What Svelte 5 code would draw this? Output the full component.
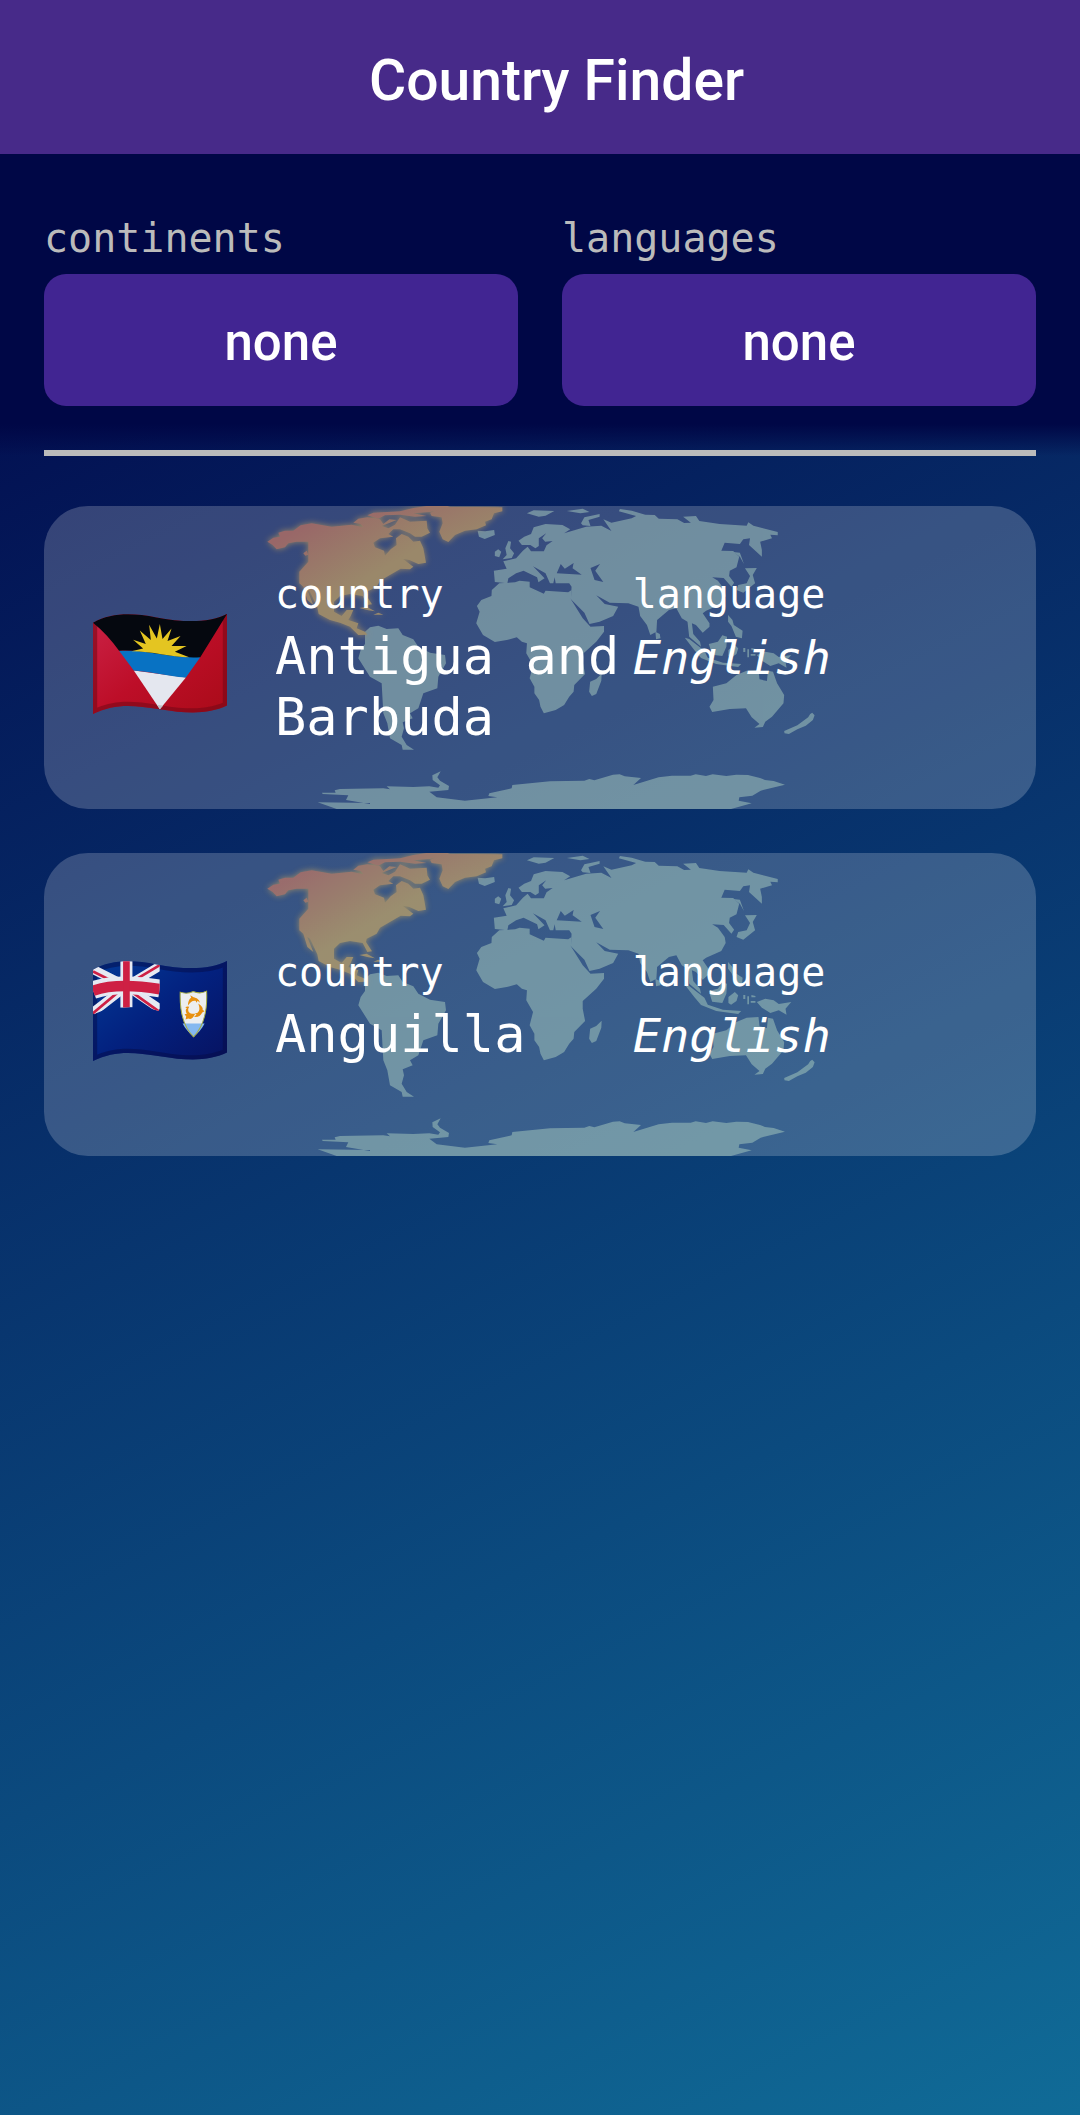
<script>
  let continent = $state('none');
  let tongue = $state('none');
  const countries = [
    { name: 'Antigua and Barbuda', language: 'English', flag: 'ag' },
    { name: 'Anguilla', language: 'English', flag: 'ai' }
  ];
</script>

{#snippet worldMap(id)}
  <svg class="map" viewBox="711 48 1638 909" aria-hidden="true">
    <defs>
      <linearGradient id="land-{id}" x1="0" y1="0" x2="0.8" y2="1">
        <stop offset="0.15" stop-color="#fb8656" />
        <stop offset="0.62" stop-color="#fdc658" />
      </linearGradient>
      <filter id="glow-{id}" x="-10%" y="-10%" width="120%" height="120%">
        <feGaussianBlur stdDeviation="9" />
      </filter>
    </defs>
    <g fill="#aacdc0" fill-rule="evenodd">
      <path d="M1005 425L1020 412L1045 407L1070 417L1105 415L1118 435L1150 448L1165 470L1200 488L1245 495L1248 520L1225 560L1222 595L1180 610L1165 655L1140 670L1148 685L1118 697L1122 715L1115 740L1130 765L1152 779H1118L1115 765L1080 745L1072 700L1060 670L1055 580L1020 560L985 505L992 480L1005 462Z" />
      <path d="M863 937L1020 939V942L948 930L955 916L878 912L876 908L917 908L914 901L930 897L1060 895L1080 898L1070 889L1150 891L1198 889L1225 893L1230 886L1208 870L1207 856L1232 844L1222 862L1230 872L1257 888L1255 900L1198 905L1220 922L1305 932L1402 922L1375 918L1378 910L1445 895L1447 885L1485 881L1560 874L1663 872L1678 867L1693 871L1749 854L1769 853L1784 859L1833 864L1810 885L1886 862L1926 857L1982 857L1997 853L2028 858L2048 853L2089 858L2119 854L2154 855L2190 864L2205 870L2231 873L2265 884L2192 902L2167 917L2128 922L2126 932L2165 940L2103 957H920Z" />
      <g transform="translate(-20 0) scale(1.014 1)">
        <path d="M1408 280L1455 277L1468 272L1498 275V292L1540 311L1545 302L1612 307L1622 300L1620 328L1655 385L1678 410L1718 408L1718 425L1695 455L1655 492L1655 515L1662 552L1630 585L1628 605L1615 620L1600 645L1575 660L1540 670L1530 650L1526 630L1512 610L1512 590L1498 565L1508 525L1488 490L1490 460L1475 455L1460 442L1430 450L1395 456L1360 435L1340 400L1350 365L1342 348L1355 330L1385 318L1386 300Z" />
        <path d="M1392 242L1430 236L1420 214L1458 205L1478 182L1492 170L1502 184L1540 184L1548 166L1566 153L1544 155L1535 145L1547 130L1525 145L1525 168L1515 175L1500 165L1475 165L1465 152L1482 140L1502 132L1510 112L1545 102L1595 105L1618 118L1600 130L1640 118L1665 110L1710 107L1740 123L1716 88L1740 98L1800 85L1813 78L1762 64L1765 57L1800 62L1840 74L1868 75L1880 86L1935 88L1955 99L1975 98L1952 80L1990 78L2000 93L2060 102L2140 107L2145 97L2160 107L2232 126L2232 136L2210 134L2215 145L2180 155L2185 180V200L2147 165L2150 145L2130 148L2120 162L2075 158L2065 182L2100 183L2118 200L2110 232L2090 242L2088 258L2103 278L2095 290L2072 264L2038 262L2055 272L2075 300L2078 318L2065 342L2020 362L2010 370L2030 400V410L2010 428L1990 405L1978 400L1982 432L2002 455L2005 470L1970 440L1965 395L1948 385L1932 355L1910 360L1875 390L1873 425L1855 435L1845 405L1825 378L1820 350L1790 340L1735 338L1695 316L1720 342L1760 350L1745 378L1705 395L1675 402L1660 368L1620 328L1622 290L1615 280L1575 280L1572 262L1568 280L1558 280L1545 250L1508 229L1542 265L1524 277L1520 262L1480 242L1458 250L1435 265L1432 280L1395 276ZM1578 250L1590 222L1602 236L1628 219L1625 235L1652 254ZM1678 234L1706 222L1692 242L1716 276L1690 270Z" />
        <path d="M1418 208L1430 195L1426 175L1435 153L1443 155L1440 175L1452 190L1445 204ZM1395 185L1405 178L1414 185L1408 202L1395 198ZM1344 122L1366 124L1393 120L1395 135L1365 147L1348 140ZM1490 70L1510 61L1571 63L1545 77L1525 80ZM1608 63L1655 56L1675 66L1648 70ZM1650 100L1660 82L1705 72V80L1672 90L1678 108L1655 106Z" />
        <path d="M2135 235L2170 234L2158 255L2165 280L2130 308L2110 300L2115 285L2140 280L2150 258ZM2100 186L2120 188L2132 222L2120 200ZM1870 425L1883 432L1885 445L1872 448ZM1957 443L1970 447L2015 482L2025 503L2070 518L2124 522L2115 531L2050 522L2005 504L1985 480ZM2028 462L2055 455L2068 436L2082 440L2080 470L2068 498L2038 494ZM2086 480L2105 465L2115 475L2110 492L2094 503L2086 498ZM2085 375L2098 390L2102 405L2128 422L2126 445L2108 440L2095 408L2085 395ZM2170 495L2195 485L2220 490L2235 501L2272 495L2255 515L2258 533L2235 520L2210 528L2185 512Z" />
        <path d="M2130 474h6v12h-6zM2142 478h5v24h-5zM2154 474l12 3v4h-12zM2152 492h14v5h-14z" />
        <path d="M2040 590L2080 580L2110 555L2140 542L2175 540L2178 568L2200 573L2203 542L2218 545L2230 580L2251 615L2249 640L2215 680L2195 695L2188 711L2163 713L2178 702L2155 682L2138 655L2090 657L2038 666L2030 650L2042 630ZM2328 672L2334 668L2341 676L2336 690L2315 707L2290 718L2265 732L2252 730L2251 723L2290 706L2322 682ZM1711 551L1710 572L1695 612L1682 618L1674 605L1677 575L1695 567Z" />
      </g>
    </g>
    {#each [true, false] as glowing}
      <g
        fill={glowing ? '#ffc24a' : `url(#land-${id})`}
        filter={glowing ? `url(#glow-${id})` : undefined}
      >
        <path d="M712 155L730 143L750 140L745 128L765 122L790 122L812 106L845 100L905 110L965 104L1000 112L992 102L970 98L985 86L1012 82L1050 88L1060 102L1078 88L1100 90L1055 108L1075 115L1095 104L1110 82L1140 95L1190 92L1192 115L1200 128L1175 140L1155 140L1140 130L1110 118L1090 118L1075 132L1090 140L1050 145L1030 158L1035 172L1062 182L1065 197L1082 178L1100 165L1098 145L1115 132L1135 140L1150 155L1170 152L1180 175L1188 218L1165 222L1138 210L1118 206L1150 230L1140 238L1112 236L1050 272L1040 290L1010 305L1008 315L1026 343L1012 345L998 318L960 312L930 318L912 335L912 365L935 378L950 360H970L962 378L955 390L985 400L980 415L1005 425L1012 434L985 435L960 410L930 398L900 390L866 372L862 352L840 305L832 300L850 345L832 330L820 290L808 280V245L835 215V155H800L775 160L765 172L740 178L728 165Z" />
        <path d="M1012 76L1030 68L1110 64L1150 54L1190 48H1260L1235 58L1200 66L1150 70L1190 78L1155 80L1110 74L1065 76L1045 86ZM1200 68L1250 50L1417 52V64L1392 70L1385 88L1365 95L1368 106L1340 118L1305 122L1275 135L1255 156L1238 148L1228 125L1238 100L1235 82L1205 78ZM988 354L1010 350L1035 364L1015 361ZM1030 374L1045 368L1060 374ZM820 190L830 182L835 194L826 197Z" />
      </g>
    {/each}
  </svg>
{/snippet}

{#snippet flagAg()}
  <svg class="flag" viewBox="40 72 401 299" role="img" aria-label="Flag of Antigua and Barbuda">
    <defs>
      <linearGradient id="ag-red" x1="0" y1="0" x2="1" y2="1">
        <stop offset="0" stop-color="#cb2348" />
        <stop offset="0.5" stop-color="#bd0e28" />
        <stop offset="1" stop-color="#a90b18" />
      </linearGradient>
      <clipPath id="ag-wave"><path d="M40 98C95 68 155 68 230 82S385 101 441 72V346C385 372 325 371 240 357S105 340 40 371Z" /></clipPath>
    </defs>
    <g clip-path="url(#ag-wave)">
      <path fill="url(#ag-red)" d="M40 60H441V380H40Z" />
      <path fill="none" stroke="#760818" stroke-opacity="0.6" stroke-width="25" d="M40 98V371C105 340 155 343 240 357S385 372 441 346V72" />
      <path fill="#e4e7ef" d="M162 241L318 262L240 357Z" />
      <path fill="#c0c2c8" d="M232 344L250 346L240 357Z" />
      <path fill="#0872c3" d="M118 182L240 180L361 201L318 262C260 258 220 245 162 241Z" />
      <path fill="#05080f" d="M40 98V60H441V72L361 201C285 207 190 176 118 182C95 150 70 122 40 98Z" />
      <path fill="#e4c521" d="M155 183L190 175L160 149L198 162L180 121L213 150L208 104L231 145L240 102L248 147L275 115L263 153L302 138L275 168L320 168L285 185L328 201C270 200 220 183 155 183Z" />
    </g>
  </svg>
{/snippet}

{#snippet flagAi()}
  <svg class="flag" viewBox="40 63 401 299" role="img" aria-label="Flag of Anguilla">
    <defs>
      <linearGradient id="ai-blue" x1="0" y1="0" x2="1" y2="1">
        <stop offset="0" stop-color="#033b98" />
        <stop offset="0.5" stop-color="#03217f" />
        <stop offset="1" stop-color="#071260" />
      </linearGradient>
      <clipPath id="ai-wave"><path d="M40 89C95 59 155 59 230 73S385 92 441 63V337C385 363 325 362 240 348S105 331 40 362Z" /></clipPath>
      <clipPath id="ai-jack"><path d="M40 60H240V213C205 200 155 199 122 203C90 204 65 210 40 225Z" /></clipPath>
    </defs>
    <g clip-path="url(#ai-wave)">
      <path fill="url(#ai-blue)" d="M40 50H441V370H40Z" />
      <path fill="none" stroke="#050c48" stroke-opacity="0.5" stroke-width="25" d="M40 89V362C105 331 155 334 240 348S385 363 441 337V63C385 92 300 87 230 73S95 59 40 89" />
      <g clip-path="url(#ai-jack)" fill="none">
        <path stroke="#e6e9f2" stroke-width="27" d="M40 88L140 138L240 206M240 78L140 138L40 216" />
        <path stroke="#ce2044" stroke-width="8" d="M40 94L140 144L236 213M240 75L140 135L40 219" />
        <path stroke="#e6e9f2" stroke-width="53" d="M40 150C90 132 160 132 240 145" />
        <path stroke="#e6e9f2" stroke-width="36" d="M140 60V203" />
        <path stroke="#ce2044" stroke-width="32" d="M40 152C90 134 160 134 240 147" />
        <path stroke="#ce2044" stroke-width="20" d="M140 60V203" />
      </g>
      <path fill="#eceef0" d="M301 156Q322 163 340 154Q360 163 380 153C383 215 370 260 341 290C312 262 299 220 301 156Z" />
      <path fill="#84b8f0" d="M308 250H374Q363 272 341 290Q318 270 308 250Z" />
      <path fill="none" stroke="#a5ac45" stroke-width="3" d="M301 156Q322 163 340 154Q360 163 380 153C383 215 370 260 341 290C312 262 299 220 301 156Z" />
      <g fill="#e8900f">
        <path d="M324 196C325 182 330 174 334 173L331 165L341 171C350 173 358 177 360 188L353 182L350 188L347 182C336 181 332 186 324 196Z" />
        <path d="M355 190C366 197 370 204 368 209L374 213L367 217C361 228 354 232 342 230L350 224L345 220L353 218C361 209 359 202 355 190Z" />
        <path d="M316 201L322 199L328 200L325 206C324 214 327 219 336 221L346 221L341 229C337 237 330 237 325 235L317 238L319 229L314 222L321 221C316 214 317 207 321 204Z" />
      </g>
    </g>
  </svg>
{/snippet}

<div class="app">
  <header><h1>Country Finder</h1></header>
  <section class="filters">
    <div class="field">
      <label for="continents">continents</label>
      <button id="continents" type="button" onclick={() => (continent = 'none')}>{continent}</button>
    </div>
    <div class="field">
      <label for="languages">languages</label>
      <button id="languages" type="button" onclick={() => (tongue = 'none')}>{tongue}</button>
    </div>
    <hr />
  </section>
  <main>
    {#each countries as item}
      <article>
        {@render worldMap(item.flag)}
        <div class="flag-cell">
          {#if item.flag === 'ag'}{@render flagAg()}{:else}{@render flagAi()}{/if}
        </div>
        <dl>
          <div class="country">
            <dt>country</dt>
            <dd>{item.name}</dd>
          </div>
          <div class="language">
            <dt>language</dt>
            <dd><em>{item.language}</em></dd>
          </div>
        </dl>
      </article>
    {/each}
  </main>
</div>

<style>
  :global(body) {
    margin: 0;
  }
  .app {
    min-height: 100vh;
    background: linear-gradient(154deg, #000046, #106b97);
    color: #fff;
    font-family: 'DejaVu Sans Mono', monospace;
  }
  header {
    padding: 47px 0 39px 33px;
    background: #472a89;
    text-align: center;
  }
  h1 {
    margin: 0;
    font: 500 57px/68px Roboto, sans-serif;
  }
  .filters {
    display: grid;
    grid-template-columns: 1fr 1fr;
    column-gap: 44px;
    padding: 60px 44px 0;
    background: linear-gradient(#000746 calc(100% - 32px), transparent);
  }
  .field {
    display: flex;
    flex-direction: column;
  }
  label {
    color: #bbb;
    font-size: 40px;
    line-height: 48px;
    margin-bottom: 12px;
  }
  button {
    padding: 37px 0 31px;
    border: 0;
    border-radius: 22px;
    background: #412592;
    color: #fff;
    font: 500 51px/64px Roboto, sans-serif;
    cursor: pointer;
  }
  hr {
    grid-column: 1 / -1;
    width: 100%;
    height: 6px;
    margin: 44px 0 0;
    border: 0;
    background: #bbb;
  }
  main {
    display: flex;
    flex-direction: column;
    gap: 44px;
    padding: 50px 44px;
  }
  article {
    position: relative;
    display: flex;
    align-items: center;
    min-height: 303px;
    border-radius: 44px;
    overflow: hidden;
    background: rgba(255, 255, 255, 0.2);
  }
  .map {
    position: absolute;
    inset: 0;
    width: 100%;
    height: 100%;
    opacity: 0.5;
  }
  .flag-cell {
    position: relative;
    padding: 13px 48px 0 49px;
  }
  .flag {
    display: block;
    width: 134px;
    height: 100px;
  }
  dl {
    position: relative;
    flex: 1;
    display: flex;
    margin: 0;
    padding-top: 4px;
  }
  .country {
    flex: 0 0 47%;
  }
  .language {
    flex: 1;
  }
  dt {
    font-size: 40px;
    line-height: 47px;
    margin-bottom: 8px;
  }
  dd {
    margin: 0;
    font-size: 52px;
    line-height: 61px;
  }
  em {
    font-size: 47px;
    line-height: 1;
  }
</style>
